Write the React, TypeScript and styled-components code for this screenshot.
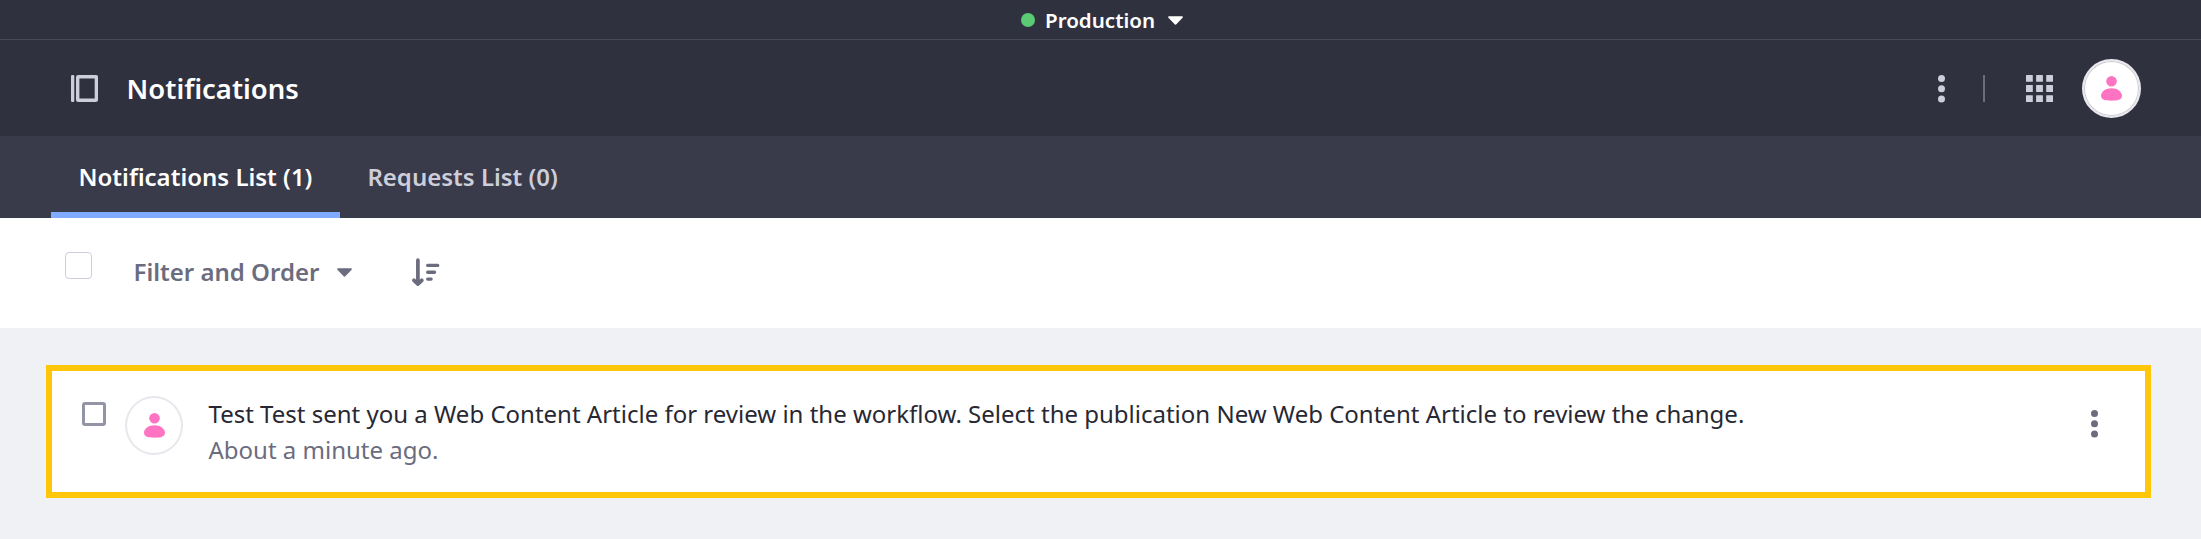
import React from 'react';
import styled, { createGlobalStyle } from 'styled-components';

const GlobalStyle = createGlobalStyle`
  *, *::before, *::after { box-sizing: border-box; }
  body {
    margin: 0;
    background: #f0f1f5;
    font-family: 'Noto Sans', sans-serif;
    font-size: 24px;
    line-height: 36px;
    color: #272833;
  }
  svg { display: block; flex: none; }
`;

const Page = styled.div`
  min-height: 539px;
  background: #f0f1f5;
`;

const EnvironmentBar = styled.div`
  display: flex;
  align-items: center;
  height: 40px;
  padding: 1px 0 0 1021px;
  border-bottom: 1px solid #494a57;
  background: #30313f;
  color: #fff;
`;

const StatusDot = styled.span`
  width: 14px;
  height: 14px;
  margin-right: 10px;
  border-radius: 50%;
  background: #5aca75;
`;

const EnvironmentName = styled.span`
  margin-right: 13px;
  font-size: 20.57px;
  font-weight: 600;
  white-space: nowrap;
`;

const Header = styled.header`
  display: flex;
  align-items: center;
  height: 96px;
  padding: 1px 60px 0 71px;
  background: #30313f;
  color: #cdced9;
`;

const Title = styled.h1`
  flex: 1;
  margin: 0 0 0 28.6px;
  color: #fff;
  font-size: 27.43px;
  font-weight: 600;
`;

const Divider = styled.span`
  width: 2px;
  height: 27px;
  margin: 0 41px 0 38px;
  background: #6b6c7e;
`;

const Avatar = styled.span<{ $onDark?: boolean }>`
  display: flex;
  flex: none;
  align-items: center;
  justify-content: center;
  width: ${(p) => (p.$onDark ? '59px' : '58px')};
  height: 59px;
  border: 2px solid #e7e7ed;
  border-radius: 50%;
  background: #fff;
  color: #ff73c3;
  margin-left: ${(p) => (p.$onDark ? '29px' : '19px')};
  box-shadow: ${(p) => (p.$onDark ? 'inset 0 0 0 1px #c9c9d0' : 'none')};
`;

const Tabs = styled.nav`
  display: flex;
  height: 82px;
  padding-left: 51px;
  background: #393a4a;
`;

const Tab = styled.a<{ $active?: boolean }>`
  display: flex;
  align-items: center;
  padding: 0 27.5px;
  white-space: nowrap;
  font-weight: 600;
  color: ${(p) => (p.$active ? '#fff' : '#cdced9')};
  box-shadow: ${(p) => (p.$active ? 'inset 0 -6px 0 #80acff' : 'none')};
`;

const Toolbar = styled.div`
  display: flex;
  align-items: center;
  height: 110px;
  padding: 0 0 2px 65px;
  background: #fff;
  color: #6b6c7e;
`;

const SelectAll = styled.span`
  width: 27px;
  height: 27px;
  margin: 0 41.5px 13px 0;
  border: 1px solid #cdced9;
  border-radius: 4px;
`;

const FilterLabel = styled.span`
  margin-right: 18px;
  font-weight: 600;
  white-space: nowrap;
`;

const Caret = styled.svg`
  width: 15px;
  height: 9px;
  fill: currentColor;
`;

const SortIcon = styled.svg`
  width: 28px;
  height: 28px;
  margin-left: 59.5px;
`;

const Content = styled.main`
  padding: 37px 50px 0 46px;
`;

const Notification = styled.article`
  display: flex;
  align-items: flex-start;
  height: 133px;
  padding: 25px 47px 0 30px;
  border: 6px solid #ffc60a;
  background: #fff;
`;

const RowCheckbox = styled.span`
  width: 24px;
  height: 24px;
  margin-top: 6px;
  border: 3px solid #9394a5;
  border-radius: 3px;
`;

const Message = styled.div`
  flex: 1;
  margin-left: 25.5px;
`;

const Line = styled.p<{ $muted?: boolean }>`
  margin: 0;
  white-space: nowrap;
  color: ${(p) => (p.$muted ? '#6b6c7e' : '#272833')};
`;

const RowMenu = styled.span`
  margin-top: 14px;
  color: #6b6c7e;
`;

const CaretDown = () => (
  <Caret viewBox="0 0 15 9">
    <path d="M1 .2h13c.8 0 1.200.9.6 1.500L8.600 8.100a1.500 1.500 0 0 1-2.200 0L.4 1.700C-.2 1.100.2.2 1 .2z" />
  </Caret>
);

const EllipsisIcon = () => (
  <svg width="7" height="28" viewBox="0 0 7 28" fill="currentColor">
    {[3.6, 13.8, 24.1].map((y) => (
      <circle key={y} cx="3.5" cy={y} r="3.5" />
    ))}
  </svg>
);

const PanelIcon = () => (
  <svg width="27" height="27" viewBox="0 0 27 27">
    <rect width="3.300" height="27" rx="1.200" fill="currentColor" />
    <rect x="6.700" y="1.700" width="18.700" height="23.600" rx=".6" fill="none" stroke="currentColor" strokeWidth="3.400" />
  </svg>
);

const AppsIcon = () => (
  <svg width="27" height="27" viewBox="0 0 27 27" fill="currentColor">
    {[0, 10.1, 20.2].map((y) =>
      [0, 10.1, 20.2].map((x) => <rect key={`${x}-${y}`} x={x} y={y} width="6.800" height="6.800" rx=".5" />),
    )}
  </svg>
);

const PersonIcon = () => (
  <svg width="21" height="25" viewBox="0 0 21 25" fill="currentColor">
    <circle cx="10.500" cy="5.300" r="5.300" />
    <path d="M10.500 12.200C4.500 12.200 0 15.700 0 19.800c0 4 4.200 4.900 10.500 4.900S21 23.800 21 19.800c0-4.100-4.500-7.600-10.500-7.600z" />
  </svg>
);

export default function App() {
  return (
    <Page>
      <GlobalStyle />
      <EnvironmentBar>
        <StatusDot />
        <EnvironmentName>Production</EnvironmentName>
        <CaretDown />
      </EnvironmentBar>
      <Header>
        <PanelIcon />
        <Title>Notifications</Title>
        <EllipsisIcon />
        <Divider />
        <AppsIcon />
        <Avatar $onDark>
          <PersonIcon />
        </Avatar>
      </Header>
      <Tabs>
        <Tab $active>Notifications List (1)</Tab>
        <Tab>Requests List (0)</Tab>
      </Tabs>
      <Toolbar>
        <SelectAll />
        <FilterLabel>Filter and Order</FilterLabel>
        <CaretDown />
        <SortIcon viewBox="0 0 28 28" fill="none" stroke="currentColor" strokeLinecap="round">
          <path d="M5.900 2.200v21.500M2 22.300l3.900 3.800 3.900-3.800" strokeLinejoin="round" strokeWidth="3.700" />
          <path d="M15.700 7.400h10M15.700 14.200h6.800M15.700 21.100h3.400" strokeWidth="3.400" />
        </SortIcon>
      </Toolbar>
      <Content>
        <Notification>
          <RowCheckbox />
          <Avatar>
            <PersonIcon />
          </Avatar>
          <Message>
            <Line>
              Test Test sent you a Web Content Article for review in the workflow. Select the publication New Web Content
              Article to review the change.
            </Line>
            <Line $muted>About a minute ago.</Line>
          </Message>
          <RowMenu>
            <EllipsisIcon />
          </RowMenu>
        </Notification>
      </Content>
    </Page>
  );
}
